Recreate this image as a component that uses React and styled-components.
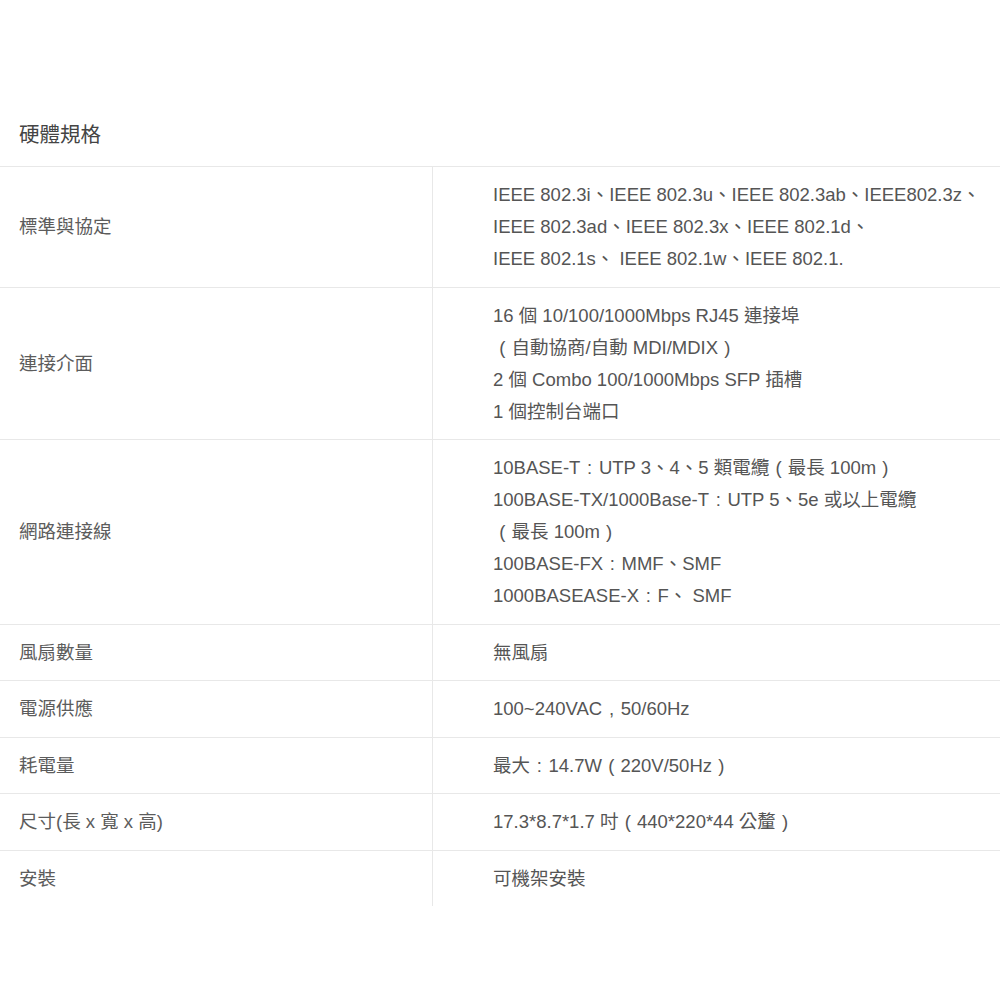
import React from 'react';
import styled, { createGlobalStyle } from 'styled-components';

const GlobalStyle = createGlobalStyle`
  body {
    margin: 0;
    background: #ffffff;
    font-family: "Liberation Sans", "Noto Sans CJK TC", sans-serif;
  }
`;

const specs = [
  {
    label: '標準與協定',
    lines: [
      'IEEE 802.3i、IEEE 802.3u、IEEE 802.3ab、IEEE802.3z、',
      'IEEE 802.3ad、IEEE 802.3x、IEEE 802.1d、',
      'IEEE 802.1s、 IEEE 802.1w、IEEE 802.1.',
    ],
  },
  {
    label: '連接介面',
    lines: [
      '16 個 10/100/1000Mbps RJ45 連接埠',
      '（自動協商/自動 MDI/MDIX）',
      '2 個 Combo 100/1000Mbps SFP 插槽',
      '1 個控制台端口',
    ],
  },
  {
    label: '網路連接線',
    lines: [
      '10BASE-T：UTP 3、4、5 類電纜（最長 100m）',
      '100BASE-TX/1000Base-T：UTP 5、5e 或以上電纜',
      '（最長 100m）',
      '100BASE-FX：MMF、SMF',
      '1000BASEASE-X：F、 SMF',
    ],
  },
  { label: '風扇數量', lines: ['無風扇'] },
  { label: '電源供應', lines: ['100~240VAC，50/60Hz'] },
  { label: '耗電量', lines: ['最大：14.7W（220V/50Hz）'] },
  { label: '尺寸(長 x 寬 x 高)', lines: ['17.3*8.7*1.7 吋（440*220*44 公釐）'] },
  { label: '安裝', lines: ['可機架安裝'] },
];

const Page = styled.div`
  padding-top: 119px;
  width: 100%;
  overflow: hidden;
`;

const Title = styled.h2`
  margin: 0;
  padding: 0 19px 15px;
  font-size: 20.5px;
  font-weight: normal;
  line-height: 32px;
  color: #444;
`;

const Table = styled.div`
  display: flex;
  flex-direction: column;
`;

const Row = styled.div`
  display: grid;
  grid-template-columns: 432px 1fr;
  border-top: 1px solid #e8e8e8;
`;

const Label = styled.div`
  display: flex;
  align-items: center;
  padding: 12px 19px 11.5px;
  font-size: 18.5px;
  line-height: 32px;
  color: #5c5c5c;
  white-space: nowrap;
`;

const Value = styled.div`
  border-left: 1px solid #e8e8e8;
  padding: 12px 0 11.5px 60px;
  font-size: 18.5px;
  line-height: 32px;
  color: #555;
`;

const Line = styled.div`
  white-space: nowrap;
`;

// full-width punctuation drawn centred in its box, like the original font
const Punct = styled.span`
  display: inline-block;
  width: 1em;
  text-align: center;
  font-family: "Liberation Sans", sans-serif;
`;

const punctMap = { '（': '(', '）': ')', '：': ':', '，': ',' };

function renderLine(text) {
  return text.split(/([（）：，])/).map((part, i) =>
    punctMap[part] ? <Punct key={i}>{punctMap[part]}</Punct> : part
  );
}

export default function App() {
  return (
    <Page>
      <GlobalStyle />
      <Title>硬體規格</Title>
      <Table>
        {specs.map((spec) => (
          <Row key={spec.label}>
            <Label>{spec.label}</Label>
            <Value>
              {spec.lines.map((line) => (
                <Line key={line}>{renderLine(line)}</Line>
              ))}
            </Value>
          </Row>
        ))}
      </Table>
    </Page>
  );
}
